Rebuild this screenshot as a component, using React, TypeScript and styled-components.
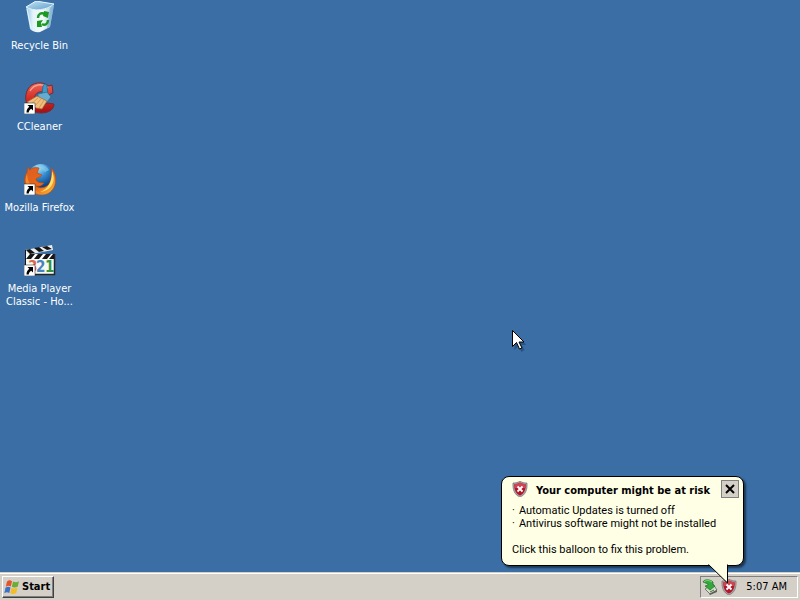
import { useState } from "react";
import styled, { createGlobalStyle } from "styled-components";

const GlobalStyle = createGlobalStyle`
  * {
    box-sizing: border-box;
  }

  body {
    margin: 0;
    background: #3a6ea5;
    font-family: "DejaVu Sans Condensed", "DejaVu Sans", sans-serif;
    font-size: 11px;
    line-height: 13px;
  }

  button {
    font: inherit;
    color: inherit;
    padding: 0;
  }
`;

const ShortcutArrow = () => (
  <>
    <path d="M0 21h11v11H0z" fill="#fff" stroke="#222" strokeWidth=".5" />
    <path d="M3.500 23h5.500v5.500l-1.800-1.800c-1.500 1-2.200 2-2.500 3.800H2.500c0-2.400.8-4 2.800-5.700z" fill="#000" />
  </>
);

const RecycleBinIcon = () => (
  <svg width="32" height="32" viewBox="0 0 32 32" aria-hidden="true">
    <defs>
      <linearGradient id="bin" x1="0" x2="1">
        <stop offset="0" stopColor="#8fc4e6" />
        <stop offset=".25" stopColor="#e4f4fa" />
        <stop offset=".6" stopColor="#f4fafa" />
        <stop offset="1" stopColor="#9cc6df" />
      </linearGradient>
      <linearGradient id="binInside" x1="0" x2="1" y2="1">
        <stop stopColor="#c5e6f5" />
        <stop offset="1" stopColor="#5d9bc8" />
      </linearGradient>
    </defs>
    <path d="M2 6c8 4 17 4 28-2l-4 22-10 5c-4 1-8-1-10-3z" fill="url(#bin)" />
    <path d="M2 6 12 0l18 3c-7 6-20 8-28 3z" fill="url(#binInside)" stroke="#e3f6fd" />
    <path d="M26 7 23 27l3-1 4-22z" fill="#71a9cf" opacity=".6" />
    <path d="m3 8 4 19" stroke="#fff" strokeOpacity=".7" fill="none" />
    <g fill="none" stroke="#1b9a22" strokeWidth="2.400">
      <path d="M14 17c0-4 3-6 7-4" />
      <path d="M24 19c0 4-3 6-6 4" />
    </g>
    <path d="m20 10 5 1-1 6-5-2zM13 20l6-1-2 3 1 4-5 0z" fill="#1b9a22" />
  </svg>
);

const CCleanerIcon = () => (
  <svg width="32" height="32" viewBox="0 0 32 32" aria-hidden="true">
    <defs>
      <linearGradient id="cc" x2="0" y2="1">
        <stop stopColor="#e8685a" />
        <stop offset=".5" stopColor="#d62e27" />
        <stop offset="1" stopColor="#a30e13" />
      </linearGradient>
    </defs>
    <path
      d="M29 11 28 3l-3 1C18-1 8 0 4 7-2 18 4 31 17 31c7 0 13-3 13-9l-7-1c-4 4-10 4-12 0-3-8 4-14 10-10l3 2z"
      fill="url(#cc)"
      stroke="#792b31"
    />
    <path d="M6 9c4-7 12-8 18-3" fill="none" stroke="#f7a192" strokeWidth="1.500" />
    <path d="m18 12 1-8c1-3 4-2 4 0l1 9z" fill="#3f99cb" stroke="#176085" strokeWidth=".7" />
    <path d="m14 12 9-2 4 5-4 5-9-5z" fill="#65add0" stroke="#286889" strokeWidth=".7" />
    <path d="M13 14 3 20l5 4 4 2 6 1 5-8z" fill="#efbd79" stroke="#9a693a" strokeWidth=".7" />
    <path d="m14 16-7 6m10-5-6 7m9-6-5 8" stroke="#c08f51" fill="none" strokeWidth=".7" />
    <ShortcutArrow />
  </svg>
);

const FirefoxIcon = () => (
  <svg width="32" height="32" viewBox="0 0 32 32" aria-hidden="true">
    <defs>
      <radialGradient id="globe" cx=".4" cy=".15" r=".8">
        <stop stopColor="#a5e5ff" />
        <stop offset=".45" stopColor="#338bd0" />
        <stop offset="1" stopColor="#0d3473" />
      </radialGradient>
      <linearGradient id="fox" x2="1" y2="1">
        <stop stopColor="#dc5d21" />
        <stop offset=".55" stopColor="#e8671a" />
        <stop offset="1" stopColor="#ffc33c" />
      </linearGradient>
    </defs>
    <circle cx="17" cy="14" r="13" fill="url(#globe)" />
    <path d="M13 4c5-3 10-1 12 3l-4 2-4-3-3 2z" fill="#8ccbe8" opacity=".6" />
    <path
      d="M4 4 3 9c-6 11 0 22 13 23 11 1 18-9 15-20-1-4-2-6-4-7 1 4 1 8 0 11-1 8-10 11-15 7 4 1 6-1 8-3-4 0-8-1-8-4 1-2 4-1 6-4l-5-2 2-5C10 4 8 5 6 7z"
      fill="url(#fox)"
      stroke="#b34d19"
      strokeWidth=".7"
    />
    <path d="M28 8c5 10-1 20-12 21 8-3 12-10 12-21z" fill="#ffe06a" />
    <path d="M3 11c-4 9 2 19 13 19-6-2-12-8-13-19z" fill="#f28a2e" />
    <ShortcutArrow />
  </svg>
);

const ClapperIcon = () => (
  <svg width="32" height="32" viewBox="0 0 32 32" aria-hidden="true">
    <path d="M2 13h28v17H2z" fill="#f8f8f2" />
    <path d="M30.500 10v20.500H11" fill="none" stroke="#252525" strokeWidth="1.500" />
    <path d="m1 6 27-5 1 5-27 5z" fill="#eee" />
    <path d="m2 6 4 4 5-1-5-4zm8-2 5 4 5-1-5-4zm8-1 5 3 5-1-5-3z" fill="#151515" />
    <path d="M2 10h28v5H2z" fill="#fff" />
    <path d="m6 10-4 5h5l4-5zm8 0-4 5h5l4-5zm8 0-4 5h5l4-5zm7 0-4 5h5v-5z" fill="#151515" />
    <path d="M1 6v15h1V6z" fill="#151515" />
    <g fontFamily="DejaVu Sans Condensed" fontSize="15" fontWeight="bold">
      <text x="4" y="28" fill="#d9684c">3</text>
      <text x="12" y="28" fill="#4684bb">2</text>
      <text x="21" y="28" fill="#329345">1</text>
    </g>
    <ShortcutArrow />
  </svg>
);

const ShieldIcon = () => (
  <svg width="16" height="16" viewBox="0 0 16 16" aria-hidden="true">
    <path d="M8 0c2 1.500 4 2 7 2 .5 6.500-1.500 12-7 14C2.500 14 .5 8.500 1 2c3 0 5-.5 7-2z" fill="#a9a4a6" stroke="#777074" strokeWidth=".7" />
    <path d="M8 1.500c2 1.200 3.500 1.600 5.700 1.700.2 5.300-1.500 9.300-5.700 11.300-4.200-2-5.900-6-5.700-11.300C4.500 3.100 6 2.700 8 1.500z" fill="#b3162b" />
    <path d="M8 1.500c2 1.200 3.500 1.600 5.700 1.700L13.500 7h-11l-.2-3.800C4.500 3.100 6 2.700 8 1.500z" fill="#cf4551" />
    <path d="m5.500 5.500 5 5m0-5-5 5" stroke="#fff" strokeWidth="1.800" />
  </svg>
);

const DeviceIcon = () => (
  <svg width="16" height="16" viewBox="0 0 16 16" aria-hidden="true">
    <path d="m3 10 8-5 4 6-7 4z" fill="#d9dbcf" stroke="#5c6258" strokeWidth=".8" />
    <path d="m7 15 8-4v2l-7 3z" fill="#5c6258" />
    <path d="m8 13 4-2" stroke="#3f733c" />
    <path d="M1 3c1-3 7-3 10 0v3l2 1-5 4-5-4 3-1V5z" fill="#33a83b" stroke="#19712a" strokeWidth=".7" />
    <path d="M2 3c2-2 5-2 8 0" fill="none" stroke="#8bdc7e" />
  </svg>
);

const WindowsFlag = () => (
  <svg width="16" height="16" viewBox="0 0 16 16" aria-hidden="true">
    <path d="M3 2.500C5 1 6 1 8 2.200L6.800 7.500c-2-1.200-3-1-5 .2z" fill="#e5532b" />
    <path d="M9 2.500c2 1 4 1 6-.2L13.800 7.500c-2 1.200-4 1.200-6 .2z" fill="#6fac35" />
    <path d="M1.500 8.700c2-1.200 3-1.400 5-.2l-1.200 5.500c-2-1.200-3-1-5 .2z" fill="#3b72c5" />
    <path d="M7.500 8.700c2 1.100 4 1.100 6 0l-1.200 5.300c-2 1.200-4 1.200-6 .2z" fill="#f2bd2c" />
  </svg>
);

const shortcuts = [
  { name: "Recycle Bin", Icon: RecycleBinIcon },
  { name: "CCleaner", Icon: CCleanerIcon },
  { name: "Mozilla Firefox", Icon: FirefoxIcon },
  { name: "Media Player Classic - Ho...", Icon: ClapperIcon },
];

function App() {
  const [showBalloon, setShowBalloon] = useState(true);

  return (
    <Desktop>
      <GlobalStyle />
      <Shortcuts>
        {shortcuts.map(({ name, Icon }) => (
          <Shortcut key={name} type="button">
            <Icon />
            <span>{name}</span>
          </Shortcut>
        ))}
      </Shortcuts>

      <Pointer width="14" height="22" viewBox="0 0 14 22" aria-hidden="true">
        <path d="M2.500 3v17l4-4 3 6 3-2-3-5h5z" fill="#173c60" opacity=".5" />
        <path d="M.5.500v16l4-4 3 6.500 2.500-1-3-6h5z" fill="#fff" stroke="#000" />
      </Pointer>

      <Taskbar>
        <StartButton type="button">
          <WindowsFlag />
          Start
        </StartButton>
        <Tray>
          <DeviceIcon />
          <ShieldIcon />
          <Clock>5:07 AM</Clock>
        </Tray>
      </Taskbar>

      {showBalloon && (
        <Balloon role="alert">
          <BalloonHeader>
            <ShieldIcon />
            <BalloonTitle>Your computer might be at risk</BalloonTitle>
            <CloseButton
              type="button"
              aria-label="Close"
              onClick={() => setShowBalloon(false)}
            >
              <svg width="10" height="10" viewBox="0 0 10 10">
                <path d="m1 1 8 8m0-8-8 8" stroke="#000" strokeWidth="2" />
              </svg>
            </CloseButton>
          </BalloonHeader>
          <Warnings>
            <li>Automatic Updates is turned off</li>
            <li>Antivirus software might not be installed</li>
          </Warnings>
          <Hint>Click this balloon to fix this problem.</Hint>
          <Tail width="22" height="20" viewBox="0 0 22 20" aria-hidden="true">
            <path d="M0 0h20v19z" fill="#ffffe6" />
            <path d="M.5.500 19.500 19V.500" fill="none" stroke="#000" />
          </Tail>
        </Balloon>
      )}
    </Desktop>
  );
}

export default App;

const Desktop = styled.main`
  position: relative;
  display: flex;
  flex-direction: column;
  min-height: 100vh;
  overflow: hidden;
`;

const Shortcuts = styled.section`
  flex: 1;
  display: flex;
  flex-direction: column;
  align-items: flex-start;
  gap: 15px;
  padding: 1px 2px;
`;

const Shortcut = styled.button`
  display: flex;
  flex-direction: column;
  align-items: center;
  gap: 6px;
  width: 75px;
  min-height: 66px;
  border: 0;
  background: none;
  color: #fff;
`;

const Pointer = styled.svg`
  position: absolute;
  top: 330px;
  left: 512px;
`;

const Taskbar = styled.footer`
  display: flex;
  align-items: center;
  justify-content: space-between;
  height: 28px;
  padding: 0 2px;
  background: #d4d0c8;
  border-top: 1px solid #d4d0c8;
  box-shadow: inset 0 1px #fff;
`;

const StartButton = styled.button`
  display: flex;
  align-items: center;
  gap: 2px;
  height: 22px;
  padding: 0 3px 0 1px;
  border: 1px solid;
  border-color: #fff #404040 #404040 #fff;
  box-shadow: inset -1px -1px #808080;
  background: #d4d0c8;
  font-weight: bold;
`;

const Tray = styled.div`
  display: flex;
  align-items: center;
  gap: 3px;
  height: 22px;
  padding: 0 10px 0 1px;
  border: 1px solid;
  border-color: #808080 #fff #fff #808080;
`;

const Clock = styled.time`
  padding-left: 6px;
`;

const Balloon = styled.aside`
  position: absolute;
  right: 56px;
  bottom: 34px;
  width: 243px;
  padding: 3px 4px 9px 10px;
  border: 1px solid #000;
  border-radius: 8px;
  background: #ffffe6;
  box-shadow: 2px 2px 2px rgba(0, 0, 0, 0.5);
`;

const BalloonHeader = styled.header`
  display: flex;
  align-items: center;
  gap: 8px;
`;

const BalloonTitle = styled.h2`
  flex: 1;
  margin: 0;
  padding-top: 2px;
  font-size: 11px;
  line-height: 13px;
  white-space: nowrap;
`;

const CloseButton = styled.button`
  display: grid;
  place-items: center;
  width: 18px;
  height: 18px;
  border: 1px solid #808080;
  background: #d4d0c8;
`;

const Warnings = styled.ul`
  margin: 6px 0 13px;
  padding: 0;
  font-family: Roboto, sans-serif;
  list-style: none;
  white-space: nowrap;

  li::before {
    content: "·";
    margin-right: 4px;
  }
`;

const Hint = styled.p`
  margin: 0;
  font-family: Roboto, sans-serif;
`;

const Tail = styled.svg`
  position: absolute;
  right: 13px;
  top: calc(100% - 1px);
`;
